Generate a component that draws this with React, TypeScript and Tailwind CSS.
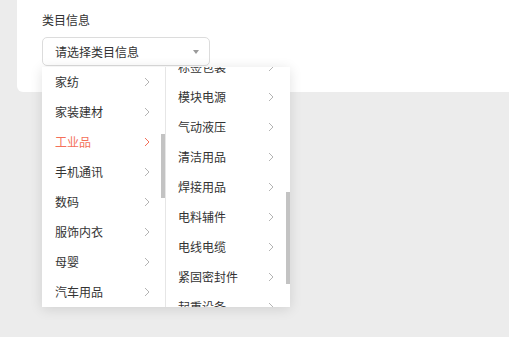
const leftItems = ["家纺", "家装建材", "工业品", "手机通讯", "数码", "服饰内衣", "母婴", "汽车用品"];
const rightItems = ["标签包装", "模块电源", "气动液压", "清洁用品", "焊接用品", "电料辅件", "电线电缆", "紧固密封件", "起重设备"];

function Chevron({ active }: { active?: boolean }) {
  return (
    <svg width="6" height="10" viewBox="0 0 6 10" className={active ? "text-[#f4705a]" : "text-[#b4b4b4]"}>
      <path d="M1 1l4 4-4 4" fill="none" stroke="currentColor" strokeWidth="1" />
    </svg>
  );
}

export default function App() {
  return (
    <div
      className="relative w-[509px] h-[337px] bg-[#ececec] pl-[17px] text-[#333] overflow-hidden"
      style={{ fontFamily: '"Noto Sans CJK SC", "Noto Sans", sans-serif' }}
    >
      <div className="bg-white h-[92px] rounded-bl-md pl-[25px] pt-[12px]">
        <div className="text-[12px] leading-[16px]">类目信息</div>
        <div className="mt-[9px] w-[168px] h-[29px] border border-[#dcdcdc] rounded-[5px] flex items-center justify-between pl-[12px] pr-[10px]">
          <span className="text-[12px]">请选择类目信息</span>
          <span className="w-0 h-0 border-l-[3px] border-r-[3px] border-t-[4px] border-l-transparent border-r-transparent border-t-[#9a9a9a]" />
        </div>
      </div>

      {/* cascader popover */}
      <div className="absolute left-[42px] top-[67px] w-[248px] h-[240px] bg-white flex shadow-[0_2px_12px_rgba(0,0,0,0.12)] text-[12px]">
        <div className="relative w-[124px] border-r border-[#e6e6e6] overflow-hidden">
          {leftItems.map((item) => {
            const active = item === "工业品";
            return (
              <div key={item} className="h-[30px] flex items-center justify-between pl-[13px] pr-[15px]">
                <span className={active ? "text-[#f4705a]" : ""}>{item}</span>
                <Chevron active={active} />
              </div>
            );
          })}
          <div className="absolute right-0 top-[67px] w-[4px] h-[64px] bg-[#c3c3c3]" />
        </div>
        <div className="relative flex-1 overflow-hidden">
          <div className="-mt-[15px]">
            {rightItems.map((item) => (
              <div key={item} className="h-[30px] flex items-center justify-between pl-[12px] pr-[16px]">
                <span>{item}</span>
                <Chevron />
              </div>
            ))}
          </div>
          <div className="absolute right-0 top-[125px] w-[4px] h-[92px] bg-[#c3c3c3]" />
        </div>
      </div>
    </div>
  );
}
